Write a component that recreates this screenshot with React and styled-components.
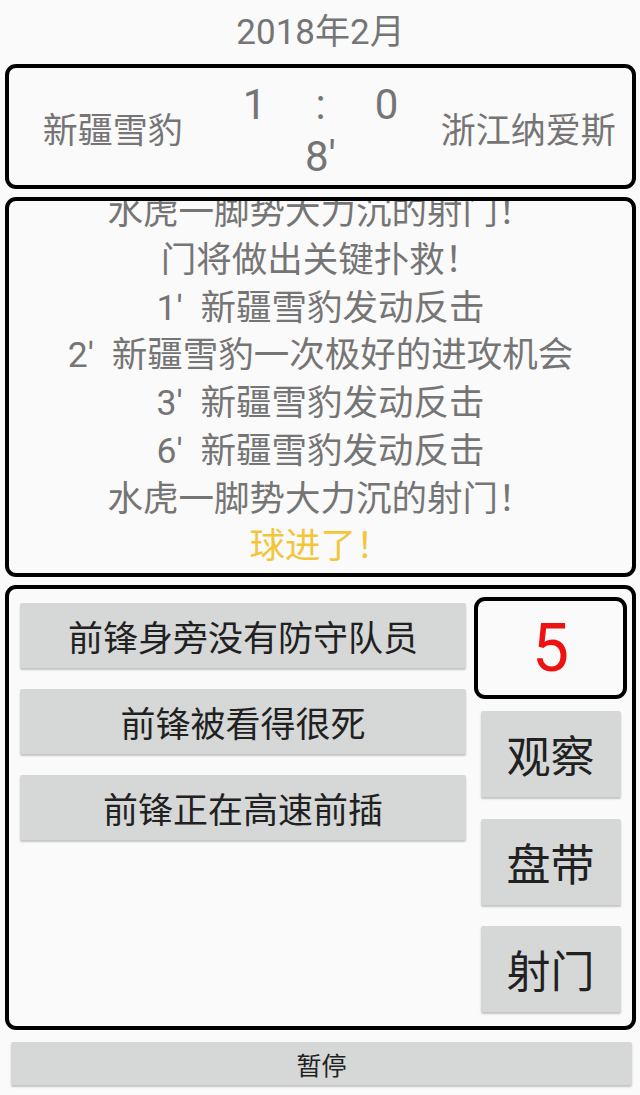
import React from 'react';
import styled, { createGlobalStyle } from 'styled-components';

const GlobalStyle = createGlobalStyle`
	html, body {
		margin: 0;
		padding: 0;
		background: #fafafa;
	}
	body {
		font-family: Roboto, "Noto Sans CJK SC", sans-serif;
	}
`;

const Page = styled.div`
	width: 640px;
	height: 1095px;
	padding: 0 4px 0 5px;
	box-sizing: border-box;
	overflow: hidden;
`;

const Title = styled.div`
	height: 64px;
	line-height: 66px;
	text-align: center;
	font-size: 35px;
	color: #757575;
`;

const Frame = styled.div`
	border: 4px solid #000;
	border-radius: 11px;
	box-sizing: border-box;
	height: ${(p) => p.h}px;
	margin-top: ${(p) => p.top || 0}px;
	background: #fafafa;
`;

const ScoreFrame = styled(Frame)`
	display: grid;
	grid-template-columns: 1fr 1fr 1fr;
	align-items: center;
	color: #757575;
`;

const Team = styled.div`
	text-align: center;
	font-size: 35px;
	padding-top: 2px;
	white-space: nowrap;
`;

const ScoreCol = styled.div`
	display: flex;
	flex-direction: column;
	align-items: center;
	padding-top: 8px;
	font-size: 42px;
	line-height: 52px;
`;

const ScoreRow = styled.div`
	display: flex;
`;

const Digit = styled.span`
	width: 66px;
	text-align: center;
`;

const LogFrame = styled(Frame)`
	display: flex;
	flex-direction: column;
	justify-content: flex-end;
	overflow: hidden;
	padding-bottom: 2px;
`;

const LogLine = styled.div`
	flex-shrink: 0;
	text-align: center;
	font-size: 35.5px;
	line-height: 47.7px;
	white-space: pre;
	color: ${(p) => (p.goal ? '#f3c63a' : '#757575')};
`;

const Panel = styled(Frame)`
	display: flex;
	align-items: flex-start;
`;

const Options = styled.div`
	display: flex;
	flex-direction: column;
	gap: 21px;
	width: 446px;
	margin-left: 11px;
	padding-top: 14px;
`;

const Actions = styled.div`
	display: flex;
	flex-direction: column;
	align-items: center;
	width: 153px;
	margin-left: 8px;
	padding-top: 8px;
`;

const GreyButton = styled.div`
	display: flex;
	align-items: center;
	justify-content: center;
	background: #d6d7d7;
	border-radius: 2px;
	box-shadow: 0 2px 2px rgba(0, 0, 0, 0.22);
	color: #212121;
	box-sizing: border-box;
`;

const OptionButton = styled(GreyButton)`
	height: 65px;
	font-size: 35px;
`;

const ActionButton = styled(GreyButton)`
	width: 140px;
	height: 86px;
	font-size: 44px;
	margin-top: ${(p) => p.gap}px;
`;

const Counter = styled.div`
	width: 153px;
	height: 102px;
	border: 4px solid #000;
	border-radius: 11px;
	box-sizing: border-box;
	display: flex;
	align-items: center;
	justify-content: center;
	font-size: 66px;
	color: #ee1111;
`;

const PauseButton = styled(GreyButton)`
	height: 43px;
	margin: 12px 4px 0 6px;
	font-size: 25px;
`;

const log = [
	'水虎一脚势大力沉的射门！',
	'门将做出关键扑救！',
	"1'  新疆雪豹发动反击",
	"2'  新疆雪豹一次极好的进攻机会",
	"3'  新疆雪豹发动反击",
	"6'  新疆雪豹发动反击",
	'水虎一脚势大力沉的射门！',
];

export default function App() {
	return (
		<Page>
			<GlobalStyle />
			<Title>2018年2月</Title>
			<ScoreFrame h={125}>
				<Team>新疆雪豹</Team>
				<ScoreCol>
					<ScoreRow>
						<Digit>1</Digit>
						<Digit>:</Digit>
						<Digit>0</Digit>
					</ScoreRow>
					<div>8'</div>
				</ScoreCol>
				<Team>浙江纳爱斯</Team>
			</ScoreFrame>
			<LogFrame h={380} top={8}>
				{log.map((line, i) => (
					<LogLine key={i}>{line}</LogLine>
				))}
				<LogLine goal>球进了！</LogLine>
			</LogFrame>
			<Panel h={445} top={8}>
				<Options>
					<OptionButton>前锋身旁没有防守队员</OptionButton>
					<OptionButton>前锋被看得很死</OptionButton>
					<OptionButton>前锋正在高速前插</OptionButton>
				</Options>
				<Actions>
					<Counter>5</Counter>
					<ActionButton gap={12}>观察</ActionButton>
					<ActionButton gap={22}>盘带</ActionButton>
					<ActionButton gap={21}>射门</ActionButton>
				</Actions>
			</Panel>
			<PauseButton>暂停</PauseButton>
		</Page>
	);
}
